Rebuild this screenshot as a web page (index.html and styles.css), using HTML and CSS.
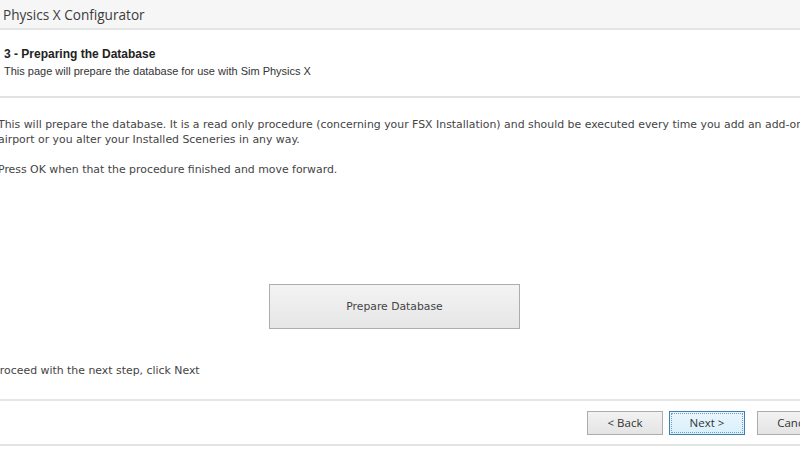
FILE: index.html
```html
<!DOCTYPE html>
<html>
<head>
<meta charset="utf-8">
<link rel="stylesheet" href="styles.css">
</head>
<body>
<div class="window">
  <div class="titlebar">Physics X Configurator</div>
  <div class="header">
    <div class="step">3 - Preparing the Database</div>
    <div class="subtitle">This page will prepare the database for use with Sim Physics X</div>
  </div>
  <div class="content">
    <p class="para">This will prepare the database. It is a read only procedure (concerning your FSX Installation) and should be executed every time you add an <span class="nowrap">add-on</span> airport or you alter your Installed Sceneries in any way.</p>
    <p class="para">Press OK when that the procedure finished and move forward.</p>
    <div class="action">
      <button class="big-btn">Prepare Database</button>
    </div>
    <p class="para next-hint">To proceed with the next step, click Next</p>
  </div>
  <div class="footer">
    <button class="btn">&lt; Back</button>
    <button class="btn focused">Next &gt;</button>
    <button class="btn cancel">Cancel</button>
  </div>
</div>
</body>
</html>
```
FILE: styles.css
```css
html, body {
  margin: 0;
  padding: 0;
  background: #ffffff;
  overflow: hidden;
}
.window {
  width: 800px;
  height: 450px;
  display: flex;
  flex-direction: column;
  overflow: hidden;
}
.titlebar {
  height: 28px;
  flex: none;
  background: #f6f6f6;
  border-bottom: 2px solid #e4e4e4;
  font-family: "Open Sans", "Noto Sans", sans-serif;
  font-size: 13.6px;
  color: #3c3c3c;
  line-height: 30px;
  padding-left: 3px;
}
.header {
  flex: none;
  background: #ffffff;
  border-bottom: 2px solid #e2e2e2;
  padding: 17px 0 0 4px;
  box-sizing: border-box;
  height: 68px;
}
.step {
  font-family: "Liberation Sans", Arial, sans-serif;
  font-weight: bold;
  font-size: 12px;
  color: #222;
  line-height: 14px;
}
.subtitle {
  font-family: "Liberation Sans", Arial, sans-serif;
  font-size: 11px;
  color: #333;
  line-height: 14px;
  margin-top: 3px;
}
.content {
  flex: none;
  height: 303px;
  border-bottom: 2px solid #e6e6e6;
  margin-left: -2px;
  padding-top: 19px;
  box-sizing: border-box;
  display: flex;
  flex-direction: column;
}
.para {
  margin: 0 0 15px 0;
  font-family: "DejaVu Sans", Verdana, sans-serif;
  font-size: 10.9px;
  line-height: 15px;
  color: #444;
  width: 830px;
}
.nowrap {
  white-space: nowrap;
}
.action {
  margin-top: 92px;
  padding-left: 271px;
}
.big-btn {
  width: 251px;
  height: 45px;
  border: 1px solid #adadad;
  background: linear-gradient(#f3f3f3, #e6e6e6);
  font-family: "DejaVu Sans", Verdana, sans-serif;
  font-size: 10.8px;
  color: #444;
}
.next-hint {
  margin-top: 34px;
  margin-left: -20px;
}
.footer {
  flex: none;
  height: 45px;
  border-bottom: 2px solid #e4e4e4;
  display: flex;
  align-items: center;
  gap: 6px;
  padding-left: 587px;
  box-sizing: border-box;
}
.btn {
  width: 76px;
  height: 24px;
  border: 1px solid #acacac;
  background: linear-gradient(#f2f2f2, #e4e4e4);
  font-family: "Open Sans", "Noto Sans", sans-serif;
  font-size: 11.5px;
  color: #333;
  padding: 0;
  flex: none;
}
.btn.focused {
  border: 1px solid #3c7fb1;
  outline: 1px dotted #7a9cc0;
  outline-offset: -3px;
  background: linear-gradient(#eaf6fd, #d9f0fc);
}
.btn.cancel {
  margin-left: 6px;
}
```
